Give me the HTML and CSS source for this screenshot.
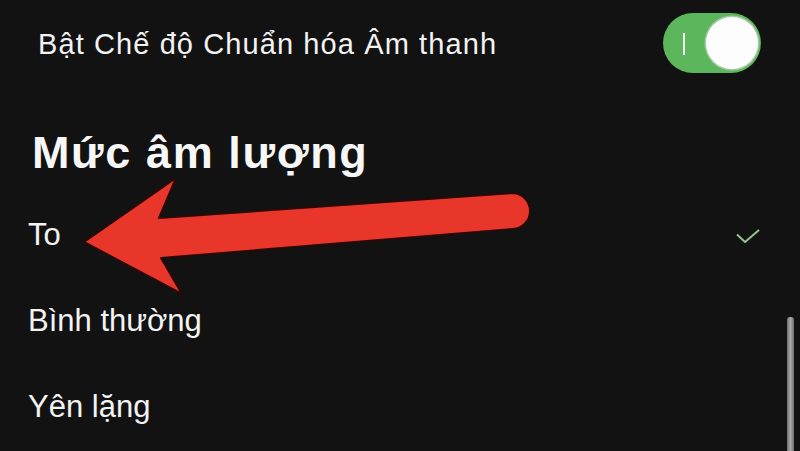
FILE: index.html
```html
<!DOCTYPE html>
<html lang="vi">
<head>
<meta charset="utf-8">
<link rel="stylesheet" href="styles.css">
</head>
<body>
<div class="screen">
  <div class="toggle-row">
    <span class="toggle-label">Bật Chế độ Chuẩn hóa Âm thanh</span>
    <div class="switch">
      <span class="switch-mark"></span>
      <span class="switch-knob"></span>
    </div>
  </div>
  <h1 class="heading">Mức âm lượng</h1>
  <ul class="options">
    <li class="option">
      <span>To</span>
      <svg class="check" width="24" height="14" viewBox="0 0 24 14"><path d="M1 5.5 L9 13 L23 1" fill="none" stroke="#92c68e" stroke-width="2"/></svg>
    </li>
    <li class="option"><span>Bình thường</span></li>
    <li class="option"><span>Yên lặng</span></li>
  </ul>
  <div class="scrollbar"></div>
  <svg class="arrow" width="800" height="451" viewBox="0 0 800 451">
    <path d="M84 242 L176 178 L159 218 L512 193 A18 18 0 0 1 512 229 L161 258 L182 294 Z" fill="#e8372a" stroke="#2a0906" stroke-width="2" stroke-linejoin="round"/>
  </svg>
</div>
</body>
</html>
```
FILE: styles.css
```css
html, body {
  margin: 0;
  padding: 0;
  background: #121212;
}
.screen {
  position: relative;
  width: 800px;
  height: 451px;
  overflow: hidden;
  background: #121212;
  color: #f3f3f3;
  font-family: "Liberation Sans", Arial, sans-serif;
}
.toggle-row {
  display: flex;
  align-items: center;
  justify-content: space-between;
  height: 60px;
  padding: 13px 39px 0 38px;
}
.toggle-label {
  font-size: 29px;
  line-height: 29px;
  letter-spacing: 1.1px;
  padding-top: 2px;
}
.switch {
  position: relative;
  width: 98px;
  height: 60px;
  border-radius: 30px;
  background: #5bb65c;
  box-sizing: border-box;
}
.switch-mark {
  position: absolute;
  left: 20px;
  top: 20px;
  width: 2px;
  height: 22px;
  background: #f4f4f4;
}
.switch-knob {
  position: absolute;
  right: 3px;
  top: 4px;
  width: 52px;
  height: 52px;
  border-radius: 50%;
  background: #fdfdfd;
  box-shadow: 0 0 0 1.5px #a7cba6;
}
.heading {
  margin: 59px 0 0 0;
  padding-left: 32px;
  font-size: 45px;
  line-height: 42px;
  letter-spacing: 1.6px;
  font-weight: 700;
  color: #f7f7f7;
}
.options {
  list-style: none;
  margin: 18px 0 0 0;
  padding: 0;
}
.option {
  display: flex;
  align-items: center;
  justify-content: space-between;
  height: 86px;
  line-height: 86px;
  padding: 0 40px 0 28px;
  font-size: 31px;
}
.check {
  display: block;
  margin-top: 2px;
}
.scrollbar {
  position: absolute;
  left: 787px;
  top: 317px;
  width: 7px;
  height: 140px;
  border-radius: 3px 3px 0 0;
  background: linear-gradient(90deg, #6e6e6e, #a8a8a8 50%, #6e6e6e);
}
.arrow {
  position: absolute;
  left: 0;
  top: 0;
}
```
